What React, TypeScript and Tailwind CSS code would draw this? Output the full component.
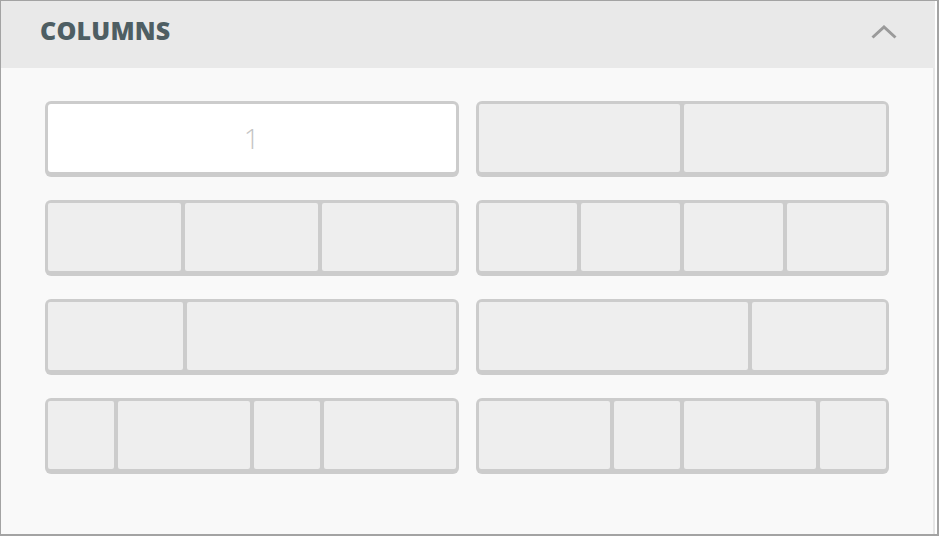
const layouts: number[][] = [
    [1],
    [1, 1],
    [1, 1, 1],
    [1, 1, 1, 1],
    [1, 2],
    [2, 1],
    [1, 2, 1, 2],
    [2, 1, 2, 1],
]

function Layout({ cols, first }: { cols: number[]; first?: boolean }) {
    return (
        <div className="flex h-[76px] gap-[4px] rounded-[6px] bg-[#cccccc] px-[3px] pt-[3px] pb-[5px]">
            {cols.map((c, i) => (
                <div
                    key={i}
                    style={{ flexGrow: c, flexBasis: 0 }}
                    className={
                        first
                            ? 'flex items-center justify-center rounded-[3px] bg-white text-[28px] font-light text-[#c4c4c4]'
                            : 'rounded-[2px] bg-[#eeeeee]'
                    }
                >
                    {first ? '1' : null}
                </div>
            ))}
        </div>
    )
}

export default function App() {
    return (
        <div
            className="flex h-[536px] w-[939px] border-t border-b-2 border-l border-[#a3a3a3] bg-white"
            style={{ fontFamily: '"Open Sans", "Liberation Sans", sans-serif' }}
        >
            <div className="flex w-[934px] flex-col">
                <div className="flex h-[67px] items-center justify-between bg-[#e9e9e9] pl-[39px] pr-[38px]">
                    <h2 className="pb-[7px] text-[25px] font-extrabold tracking-[0.2px] text-[#4e5e63]">COLUMNS</h2>
                    <svg width="26" height="14" viewBox="0 0 26 14" className="mb-[6px]">
                        <polyline points="1.5,12.5 13,2 24.5,12.5" fill="none" stroke="#9a9a9a" strokeWidth="3" />
                    </svg>
                </div>
                <div className="flex-1 border-r-2 border-[#e6e6e6] bg-[#f9f9f9] px-[44px] pt-[33px]">
                    <div className="grid grid-cols-2 gap-x-[17px] gap-y-[23px]">
                        {layouts.map((cols, i) => (
                            <Layout key={i} cols={cols} first={i === 0} />
                        ))}
                    </div>
                </div>
            </div>
            <div className="w-[2px] bg-white" />
            <div className="w-[2px] bg-[#a3a3a3]" />
        </div>
    )
}
